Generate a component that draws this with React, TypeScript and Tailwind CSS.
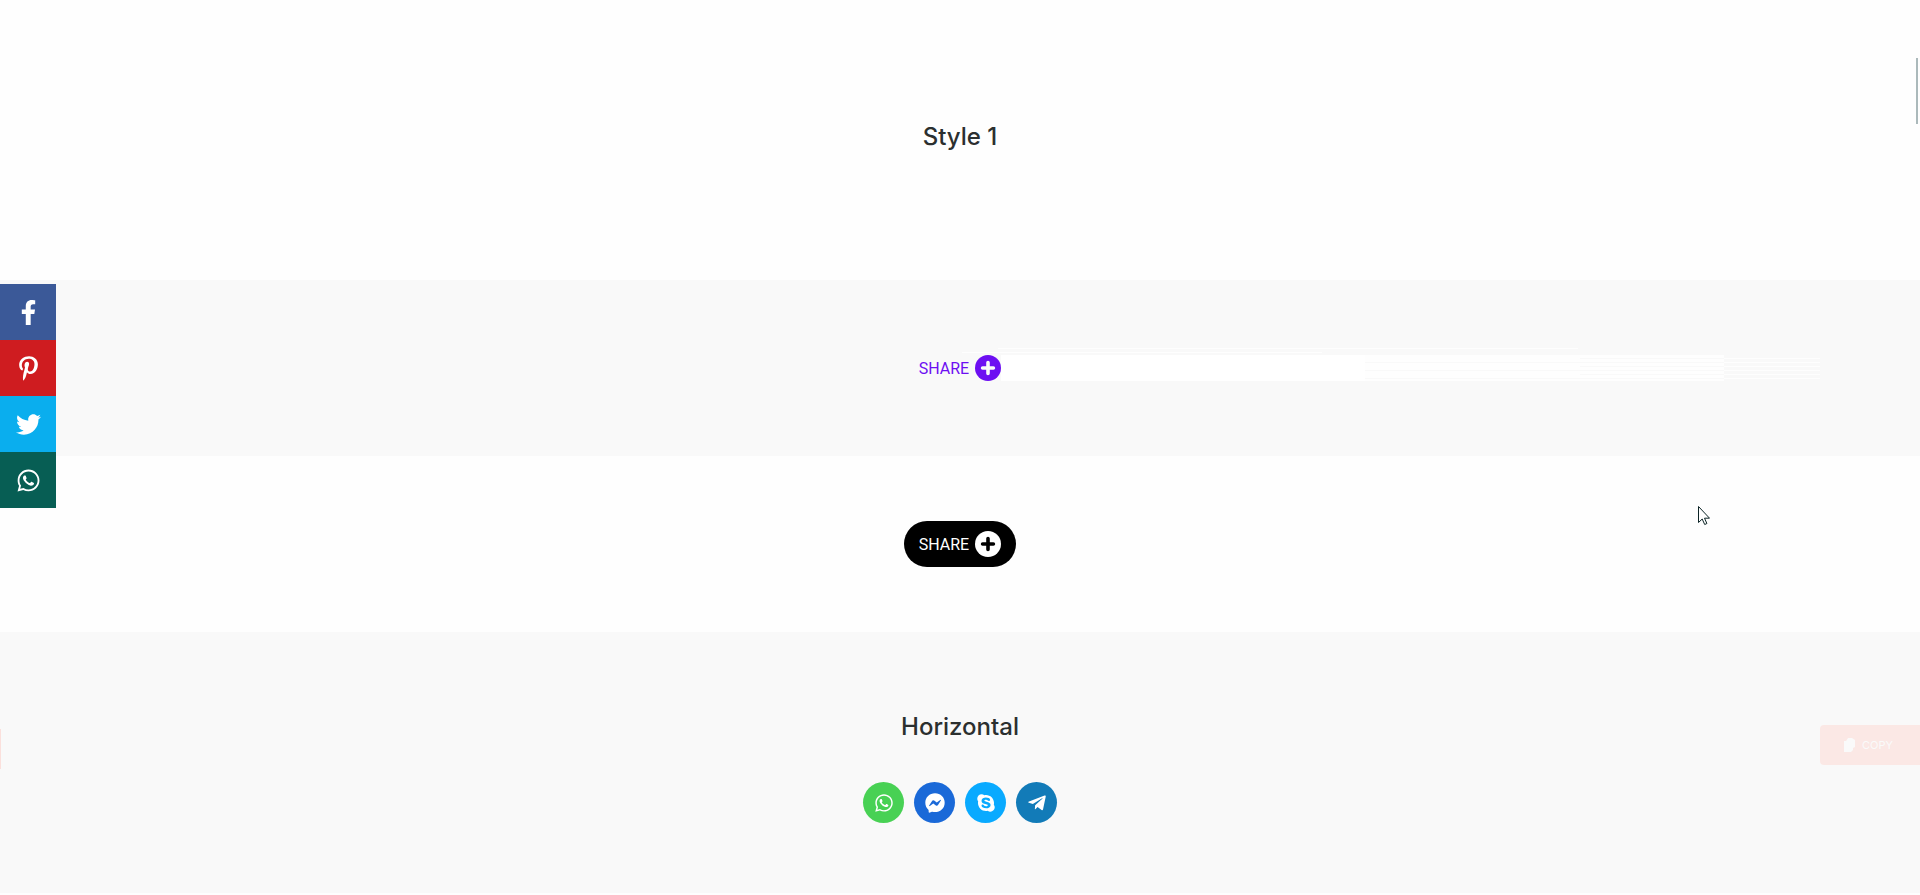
import type { ReactNode } from 'react'
import type { IconType } from 'react-icons'
import {
  FaFacebookF,
  FaFacebookMessenger,
  FaPinterestP,
  FaSkype,
  FaTelegramPlane,
  FaTwitter,
  FaWhatsapp
} from 'react-icons/fa'
import { clsx } from 'clsx'

interface SocialLink {
  name: string
  icon: IconType
  color: string
}

const stickyLinks: SocialLink[] = [
  { name: 'Facebook', icon: FaFacebookF, color: 'bg-[#3b5998]' },
  { name: 'Pinterest', icon: FaPinterestP, color: 'bg-[#cf1c20]' },
  { name: 'Twitter', icon: FaTwitter, color: 'bg-[#0aaeee]' },
  { name: 'WhatsApp', icon: FaWhatsapp, color: 'bg-[#075e54]' }
]

const horizontalLinks: SocialLink[] = [
  { name: 'WhatsApp', icon: FaWhatsapp, color: 'bg-[#48d154]' },
  { name: 'Messenger', icon: FaFacebookMessenger, color: 'bg-[#1a69d8]' },
  { name: 'Skype', icon: FaSkype, color: 'bg-[#09aaff]' },
  { name: 'Telegram', icon: FaTelegramPlane, color: 'bg-[#127bb8]' }
]

const SectionTitle = ({ children }: { children: ReactNode }) => {
  return <h2 className="text-2xl leading-[50px] font-medium text-[#2b2f2f]">{children}</h2>
}

const ShareButton = ({ dark }: { dark?: boolean }) => {
  return (
    <button
      type="button"
      className={clsx(
        'relative flex h-[46px] items-center gap-[6px] rounded-full px-[15px] font-[Roboto,sans-serif] text-base',
        dark ? 'bg-black text-white' : 'text-[#6d0ff2]'
      )}
    >
      <span className="pt-0.5">SHARE</span>
      <svg viewBox="0 0 26 26" className="size-[26px]">
        <circle cx="13" cy="13" r="13" fill="currentColor" />
        <path
          d="M13 7.6v10.8M7.6 13h10.8"
          stroke={dark ? '#000' : '#f9f9f9'}
          strokeWidth="3.6"
          strokeLinecap="round"
        />
      </svg>
    </button>
  )
}

const CopyIcon = () => {
  return (
    <svg viewBox="0 0 12 14" className="h-[14px] w-3" fill="currentColor">
      <path d="M4 0h4l3 2v7l-2 1v2l-2 2H0V3h2z" />
    </svg>
  )
}

const MouseCursor = () => {
  return (
    <svg
      viewBox="0 0 12 20"
      className="absolute top-[506px] right-[210px] h-5 w-3"
      fill="white"
      stroke="#0c2426"
      strokeWidth="1"
    >
      <path d="M.5.5v16l3.7-3.5 2.5 5.5 2.2-1-2.4-5.3h5z" />
    </svg>
  )
}

const App = () => {
  return (
    <div className="relative overflow-hidden bg-[#fefefe] font-[Inter,sans-serif]">
      <main>
        <section className="flex justify-center pt-28 pb-[118px]">
          <SectionTitle>Style 1</SectionTitle>
        </section>

        <section className="flex justify-center bg-[#f9f9f9] py-[65px]">
          <div className="relative">
            <ShareButton />
            {/* fading trail to the right of the share icon */}
            <div className="absolute top-[10px] left-[97px] flex h-[26px]">
              <div className="w-[364px] bg-white" />
              <div className="w-[215px] bg-[repeating-linear-gradient(#fefefe_0_7px,#f9f9f9_7px_8px)]" />
              <div className="w-36 bg-[repeating-linear-gradient(#fefefe_0_3px,#f9f9f9_3px_4px)]" />
              <div className="w-24 bg-[repeating-linear-gradient(#f9f9f9_0_3px,#fefefe_3px_4px)]" />
            </div>
            <div className="absolute top-[3px] left-[94px] h-px w-[580px] bg-[#fefefe]" />
            <div className="absolute top-[7px] left-[58px] h-px w-[360px] bg-[#fefefe]" />
          </div>
        </section>

        <section className="flex justify-center py-[65px]">
          <ShareButton dark />
        </section>

        <section className="flex flex-col items-center gap-[30px] bg-[#f9f9f9] py-[70px]">
          <SectionTitle>Horizontal</SectionTitle>
          <div className="flex gap-[10px]">
            {horizontalLinks.map(({ name, icon: Icon, color }) => (
              <a
                key={name}
                href="#"
                aria-label={name}
                className={clsx('flex size-[41px] items-center justify-center rounded-full text-white', color)}
              >
                <Icon className="size-5" />
              </a>
            ))}
          </div>
        </section>
      </main>
      <div className="h-0.5" />

      <nav aria-label="Share" className="absolute top-[284px] left-0 flex flex-col">
        {stickyLinks.map(({ name, icon: Icon, color }) => (
          <a
            key={name}
            href="#"
            aria-label={name}
            className={clsx('flex size-14 items-center justify-center text-white', color)}
          >
            <Icon className="size-[25px]" />
          </a>
        ))}
      </nav>

      <button
        type="button"
        className="absolute top-[725px] right-0 flex h-10 w-[100px] items-center gap-[6px] rounded-l-sm bg-[#fbe8e5] pl-6 text-[11px] text-[#fafafa]"
      >
        <CopyIcon />
        COPY
      </button>
      <div className="absolute top-[729px] left-0 h-10 w-px bg-[#fbe0dc]" />

      <div className="absolute top-[58px] right-0.5 h-[66px] w-0.5 bg-[#abb9bb]" />
      <MouseCursor />
    </div>
  )
}

export default App
